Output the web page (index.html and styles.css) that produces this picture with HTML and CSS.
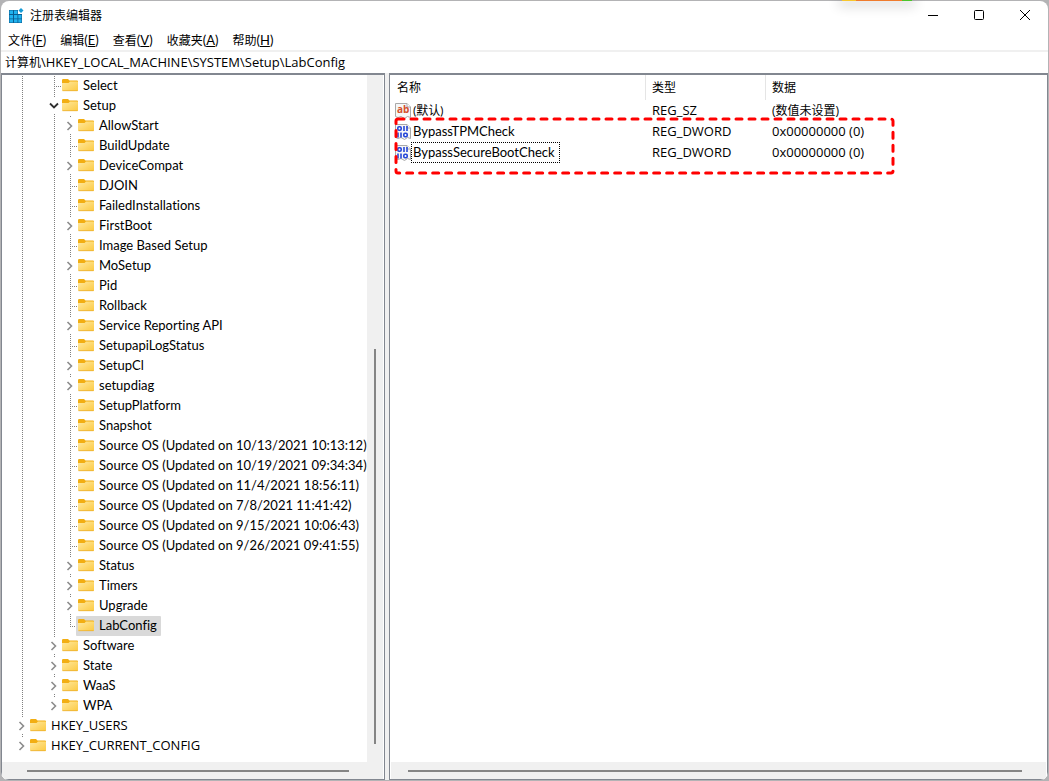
FILE: index.html
```
<!DOCTYPE html>
<html lang="zh-CN">
<head>
<meta charset="UTF-8">
<meta name="viewport" content="width=device-width, initial-scale=1.0">
<title>注册表编辑器</title>
<link rel="stylesheet" href="styles.css">
<script src="tree.js" defer></script>
</head>
<body>
<svg class="defs" aria-hidden="true">
  <linearGradient id="paper" x1="0" y1="0" x2="1" y2="1">
    <stop offset="0" stop-color="#ffe9a0"/><stop offset="1" stop-color="#fcca42"/>
  </linearGradient>
  <symbol id="folder" viewBox="0 0 16 16">
    <path d="M0 3.200Q0 2 1.200 2H6L7.500 3.500H15Q16 3.500 16 4.500V6H0Z" fill="#f2ae12"/>
    <path d="M0 6H6.500L8 4.500H15.500L16 5V13.500Q16 14 15 14H1Q0 14 0 13Z" fill="url(#paper)"/>
    <path d="M0.500 13.700H15.500" stroke="#e9aa28" stroke-width=".7"/>
  </symbol>
  <symbol id="closed" viewBox="0 0 16 16"><path d="M5.500 4L9.500 8L5.500 12" fill="none" stroke="#8c8c8c" stroke-width="1.600"/></symbol>
  <symbol id="open" viewBox="0 0 16 16"><path d="M4 5.500L8 9.500L12 5.500" fill="none" stroke="#303030" stroke-width="1.800"/></symbol>
  <symbol id="page" viewBox="0 0 16 16">
    <path d="M.5 .5H12L15.500 4V14.500L12.500 13.500L9.500 15.500L6 13.500L3 14.500L.5 13.500Z" fill="#f7f7f7" stroke="#a9a9a9"/>
    <path d="M12 .5V4H15.500" fill="#fff" stroke="#a9a9a9"/>
  </symbol>
  <symbol id="binary" viewBox="0 0 16 16">
    <use href="#page"/>
    <g fill="none" stroke="#2546d8" stroke-width="1.600">
      <rect x="2.800" y="2.800" width="3.400" height="3.400" rx="1.200"/><path d="M9 2V7M12 2V7"/>
      <path d="M3 8.500V13.500M6 8.500V13.500"/><rect x="8.800" y="9.300" width="3.400" height="3.400" rx="1.200"/>
    </g>
  </symbol>
</svg>

<div class="window">
  <header class="titlebar">
    <svg class="app-icon" viewBox="0 0 16 16">
      <path d="M1 2H10V6H14V15H1Z" fill="#0a5d91"/>
      <path d="M1.500 2.500h3.500v3.500h-3.500zM6 2.500h3.500v3.500h-3.500zM1.500 7h3.500v3.500h-3.500zM6 7h3.500v3.500h-3.500zM10.300 7h3.200v3.500h-3.200zM1.500 11.300h3.500v3.200h-3.500zM6 11.300h3.500v3.200h-3.500zM10.300 11.300h3.200v3.200h-3.200z" fill="#20b2ee"/>
      <path d="M13 0L15.500 2.500L13 5L10.500 2.500Z" fill="#159bd7"/>
    </svg>
    <h1>注册表编辑器</h1>
    <div class="controls">
      <button type="button" aria-label="最小化"><svg viewBox="0 0 12 12"><path d="M1 6.500H11"/></svg></button>
      <button type="button" aria-label="最大化"><svg viewBox="0 0 12 12"><rect x="1.500" y="1.500" width="9" height="9" rx="1"/></svg></button>
      <button type="button" aria-label="关闭"><svg viewBox="0 0 12 12"><path d="M1 1L11 11M11 1L1 11"/></svg></button>
    </div>
  </header>
  <nav class="menubar">
    <button type="button">文件<span>(<u>F</u>)</span></button>
    <button type="button">编辑<span>(<u>E</u>)</span></button>
    <button type="button">查看<span>(<u>V</u>)</span></button>
    <button type="button">收藏夹<span>(<u>A</u>)</span></button>
    <button type="button">帮助<span>(<u>H</u>)</span></button>
  </nav>
  <div class="address">计算机<span>\HKEY_LOCAL_MACHINE\SYSTEM\Setup\LabConfig</span></div>
  <main class="panes">
    <section class="pane tree-pane">
      <div class="tree" role="tree" id="tree"></div>
      <div class="vscroll"><i></i></div>
      <div class="hscroll"><i></i></div>
    </section>
    <section class="pane list-pane">
      <div class="list">
        <table>
          <colgroup><col class="col-name"><col class="col-type"><col></colgroup>
          <thead><tr><th>名称</th><th>类型</th><th>数据</th></tr></thead>
          <tbody>
            <tr>
              <td><div class="name"><svg viewBox="0 0 16 16"><use href="#page"/><text x="2" y="10">ab</text></svg><span class="cjk">(默认)</span></div></td>
              <td>REG_SZ</td><td class="cjk">(数值未设置)</td>
            </tr>
            <tr>
              <td><div class="name"><svg><use href="#binary"/></svg><span>BypassTPMCheck</span></div></td>
              <td>REG_DWORD</td><td>0x00000000 (0)</td>
            </tr>
            <tr>
              <td><div class="name"><svg><use href="#binary"/></svg><span class="focused">BypassSecureBootCheck</span></div></td>
              <td>REG_DWORD</td><td>0x00000000 (0)</td>
            </tr>
          </tbody>
        </table>
        <svg class="mark"><rect x="2" y="2" width="497" height="54" rx="2"/></svg>
      </div>
      <div class="hscroll"><i></i></div>
    </section>
  </main>
</div>
<div class="peek"></div>
</body>
</html>
```
FILE: styles.css
```
*{box-sizing:border-box;}
body{margin:0;height:100vh;padding:1px;background:#b3b3b5;color:#000;font:13px/20px Lato,"Noto Sans CJK SC",sans-serif;font-variant-ligatures:none;overflow:hidden;}
button{border:0;background:none;color:inherit;font:inherit;padding:0;}
svg{display:block;}
.defs{position:absolute;width:0;height:0;}

.window{height:100%;display:flex;flex-direction:column;background:#fff;border-radius:8px;overflow:hidden;}
.titlebar{flex:none;display:flex;align-items:center;height:29px;padding-left:7px;}
.app-icon{width:16px;height:16px;margin-right:6px;}
.titlebar h1{flex:1;margin:0;font-size:12px;font-weight:400;}
.controls{display:flex;height:28px;align-self:flex-start;}
.controls button{width:46px;display:flex;align-items:center;justify-content:center;}
.controls svg{width:12px;height:12px;fill:none;stroke:#000;}
.peek{position:absolute;top:0;right:137px;width:70px;height:1px;background:linear-gradient(90deg,#f8c62c 0 20%,#ef7b2d 20% 85%,#4cc52b 85%);box-shadow:0 2px 12px 4px #0002;}

.menubar{flex:none;display:flex;gap:14px;height:22px;padding-left:7px;border-bottom:2px solid #f0f0f0;font-size:12px;}
.menubar span{font-size:13px;}
.address{flex:none;height:21px;padding-left:4px;font-size:12px;}
.address span{font-size:13px;}
.address,.root,td{font-family:"Open Sans","Noto Sans CJK SC",sans-serif;}

.panes{flex:1;min-height:0;display:grid;grid-template-columns:384px 1fr;gap:4px;background:#f0f0f0;}
.pane{min-width:0;min-height:0;display:grid;background:#fff;border:1px solid #828790;border-top-width:2px;}
.tree-pane{grid-template:1fr 17px / 1fr 16px;padding:0 1px 0 0;}
.list-pane{grid-template:1fr 17px / 1fr;padding:0 1px;}
.hscroll,.vscroll{background:#f0f0f0;display:flex;}
.hscroll{grid-column:1 / -1;align-items:center;padding:0 24px 0 17px;}
.tree-pane .hscroll{padding:0 34px 0 25px;}
.hscroll i{flex:1;height:2px;background:#858585;}
.vscroll{justify-content:center;padding:274px 0 18px;}
.vscroll i{width:2px;background:#858585;}

.tree{padding:1px 0 0 12px;overflow:hidden;}
.row{display:flex;height:20px;white-space:nowrap;}
.cell{flex:none;width:16px;height:20px;}
.line{background:repeating-linear-gradient(#808080 0 1px,#fff 1px 2px) 8px 0 / 1px 100% no-repeat;}
.line.last{background-size:1px 50%;}
.leaf{display:flex;align-items:center;justify-content:flex-end;}
.leaf::after{content:"";width:8px;height:1px;background:repeating-linear-gradient(90deg,#808080 0 1px,#fff 1px 2px);}
.twisty{padding:2px 0;}
.twisty svg{width:16px;height:16px;background:#fff;}
.item{flex:none;display:flex;align-items:center;gap:5px;margin-left:-2px;padding:0 4px 2px 2px;}
.item svg{width:16px;height:16px;}
.selected{background:#d9d9d9;border-radius:1px;}

.list{position:relative;overflow:hidden;}
table{width:100%;border-spacing:0;table-layout:fixed;}
.col-name{width:255px;}
.col-type{width:120px;}
th,td{padding:0 0 0 6px;text-align:left;font-weight:400;white-space:nowrap;}
th{height:25px;font-size:12px;border-right:1px solid #e5e5e5;}
th:last-child{border-right:0;}
td{height:21px;line-height:20px;padding-bottom:1px;}
td:first-child{padding:0 0 0 4px;}
.name{display:flex;align-items:center;font-family:Lato,"Noto Sans CJK SC",sans-serif;}
.name svg{width:16px;height:16px;}
.name span{padding:0 5px 1px 2px;}
.name text{font:bold 10px "Open Sans",sans-serif;fill:#d4502c;}
.name .focused{outline:1px dotted #000;outline-offset:-1px;}
.list .cjk{font-size:12px;padding-bottom:0;}
.mark{position:absolute;left:3px;top:42px;width:501px;height:58px;fill:none;stroke:#f00;stroke-width:3;stroke-linecap:round;stroke-dasharray:6 7;}
```
FILE: tree.js
```
// [depth, name, state]: '+' closed, '-' open, '' leaf
const keys = [
  [2, 'Select', ''],
  [2, 'Setup', '-'],
  [3, 'AllowStart', '+'],
  [3, 'BuildUpdate', ''],
  [3, 'DeviceCompat', '+'],
  [3, 'DJOIN', ''],
  [3, 'FailedInstallations', ''],
  [3, 'FirstBoot', '+'],
  [3, 'Image Based Setup', ''],
  [3, 'MoSetup', '+'],
  [3, 'Pid', ''],
  [3, 'Rollback', ''],
  [3, 'Service Reporting API', '+'],
  [3, 'SetupapiLogStatus', ''],
  [3, 'SetupCl', '+'],
  [3, 'setupdiag', '+'],
  [3, 'SetupPlatform', ''],
  [3, 'Snapshot', ''],
  [3, 'Source OS (Updated on 10/13/2021 10:13:12)', ''],
  [3, 'Source OS (Updated on 10/19/2021 09:34:34)', ''],
  [3, 'Source OS (Updated on 11/4/2021 18:56:11)', ''],
  [3, 'Source OS (Updated on 7/8/2021 11:41:42)', ''],
  [3, 'Source OS (Updated on 9/15/2021 10:06:43)', ''],
  [3, 'Source OS (Updated on 9/26/2021 09:41:55)', ''],
  [3, 'Status', '+'],
  [3, 'Timers', '+'],
  [3, 'Upgrade', '+'],
  [3, 'LabConfig', ''],
  [2, 'Software', '+'],
  [2, 'State', '+'],
  [2, 'WaaS', '+'],
  [2, 'WPA', '+'],
  [0, 'HKEY_USERS', '+'],
  [0, 'HKEY_CURRENT_CONFIG', '+'],
];

document.getElementById('tree').innerHTML = keys.map(([depth, name, state], i) => {
  let cells = '';
  for (let d = 0; d < depth; d++) {
    cells += `<span class="cell ${d === 1 ? '' : 'line'}"></span>`;
  }
  const last = !keys.slice(i + 1).some(k => k[0] === depth);
  const cls = `cell line ${last ? 'last' : ''}`;
  cells += state
    ? `<span class="${cls} twisty"><svg><use href="#${state === '+' ? 'closed' : 'open'}"/></svg></span>`
    : `<span class="${cls} leaf"></span>`;
  const selected = name === 'LabConfig';
  return `<div class="row ${depth ? '' : 'root'}" role="treeitem" aria-level="${depth + 1}" aria-selected="${selected}">${cells}` +
    `<button type="button" class="item ${selected ? 'selected' : ''}"><svg><use href="#folder"/></svg>${name}</button></div>`;
}).join('');
```
